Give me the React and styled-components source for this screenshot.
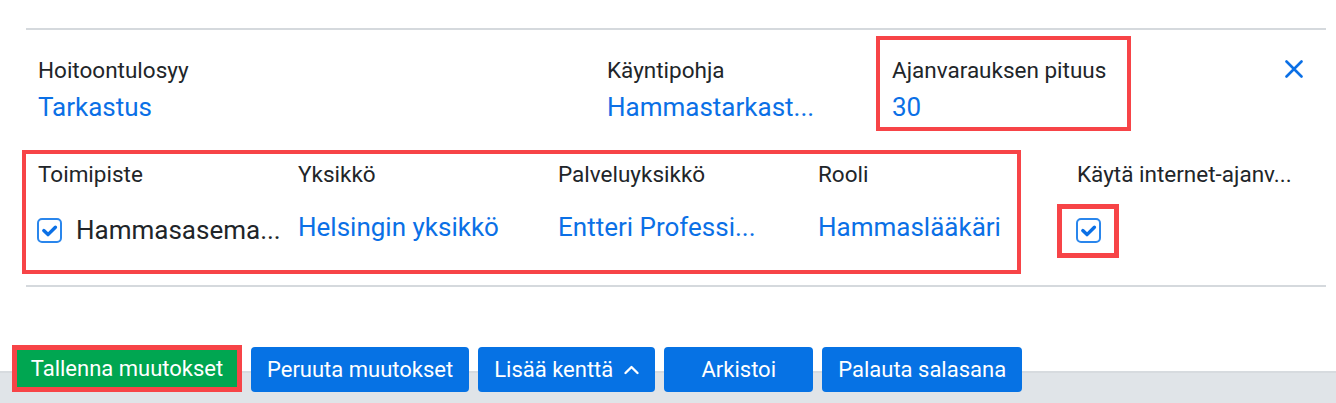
import styled, { createGlobalStyle } from 'styled-components';

const GlobalStyle = createGlobalStyle`
  body {
    margin: 0;
    font-family: Roboto, "Liberation Sans", sans-serif;
    color: #212529;
    background: #fff;
  }
`;

const BLUE = '#0b70e6';
const RED = '#f74447';

const CheckBox = () => (
  <CheckIcon viewBox="0 0 25 25" width="25" height="25">
    <rect x="1" y="1" width="23" height="23" rx="4" fill="#fff" stroke="#2a86ec" strokeWidth="2" />
    <path d="M6.8 12.6l4.2 4 7.4-7.4" fill="none" stroke={BLUE} strokeWidth="3.4" strokeLinecap="round" strokeLinejoin="round" />
  </CheckIcon>
);

const App = () => {
  return (
    <Page>
      <GlobalStyle />
      <Card>
        <Rule />
        <TopRow>
          <Cell $width={569}>
            <Label>Hoitoontulosyy</Label>
            <Value>Tarkastus</Value>
          </Cell>
          <Cell $width={285}>
            <Label>Käyntipohja</Label>
            <Value>Hammastarkast...</Value>
          </Cell>
          <Cell $width={255} $marked>
            <Label>Ajanvarauksen pituus</Label>
            <Value>30</Value>
          </Cell>
          <CloseButton aria-label="Sulje">
            <svg viewBox="0 0 18 18" width="18" height="18">
              <path d="M1.5 1.5l15 15M16.5 1.5l-15 15" stroke={BLUE} strokeWidth="2.6" strokeLinecap="round" />
            </svg>
          </CloseButton>
        </TopRow>
        <MiddleRow>
          <Group>
            <Field>
              <Label>Toimipiste</Label>
              <CheckValue>
                <CheckBox />
                <Value $plain>Hammasasema...</Value>
              </CheckValue>
            </Field>
            <Field>
              <Label>Yksikkö</Label>
              <Value>Helsingin yksikkö</Value>
            </Field>
            <Field>
              <Label>Palveluyksikkö</Label>
              <Value>Entteri Professi...</Value>
            </Field>
            <Field>
              <Label>Rooli</Label>
              <Value>Hammaslääkäri</Value>
            </Field>
          </Group>
          <InternetField>
            <InternetLabel>Käytä internet-ajanv...</InternetLabel>
            <CheckFrame>
              <CheckBox />
            </CheckFrame>
          </InternetField>
        </MiddleRow>
        <Rule $bottom />
      </Card>
      <Footer>
        <SaveButton>Tallenna muutokset</SaveButton>
        <Button>Peruuta muutokset</Button>
        <Button>
          Lisää kenttä
          <svg viewBox="0 0 15 10" width="15" height="10">
            <path d="M1.5 8L7.5 2l6 6" fill="none" stroke="#fff" strokeWidth="2.3" strokeLinecap="round" strokeLinejoin="round" />
          </svg>
        </Button>
        <Button $minWidth={149}>Arkistoi</Button>
        <Button>Palauta salasana</Button>
      </Footer>
    </Page>
  );
};

const Page = styled.div`
  width: 1336px;
  height: 403px;
  overflow: hidden;
  display: flex;
  flex-direction: column;
`;

const Card = styled.div`
  padding: 28px 10px 0 22px;
`;

const Rule = styled.div`
  height: 2px;
  background: #d5d9dd;
  margin-left: 4px;
  margin-top: ${(props) => (props.$bottom ? '11px' : '0')};
`;

const TopRow = styled.div`
  display: flex;
  align-items: flex-start;
  margin-top: 6px;
`;

const Cell = styled.div`
  width: ${(props) => props.$width}px;
  box-sizing: border-box;
  border: 4px solid ${(props) => (props.$marked ? RED : 'transparent')};
  padding: 15px 12px 3px;
  display: flex;
  flex-direction: column;
  gap: 5px;
`;

const Label = styled.div`
  font-size: 22.5px;
  line-height: 30px;
  white-space: nowrap;
`;

const Value = styled.div`
  font-size: 26px;
  line-height: 34px;
  white-space: nowrap;
  color: ${(props) => (props.$plain ? '#212529' : BLUE)};
`;

const CloseButton = styled.button`
  margin: 24px 23px 0 auto;
  padding: 0;
  border: none;
  background: none;
  display: flex;
  cursor: pointer;
`;

const MiddleRow = styled.div`
  display: flex;
  align-items: flex-start;
  margin-top: 19px;
`;

const Group = styled.div`
  display: grid;
  grid-template-columns: repeat(3, 260px) 187px;
  border: 4px solid ${RED};
  padding: 5px 12px 23px;
`;

const Field = styled.div`
  display: flex;
  flex-direction: column;
  gap: 21px;
  min-width: 0;
`;

const CheckValue = styled.div`
  display: flex;
  align-items: center;
  gap: 14px;
  margin-top: 3px;
  margin-left: -1px;
`;

const CheckIcon = styled.svg`
  display: block;
  flex-shrink: 0;
`;

const InternetField = styled.div`
  margin-left: 36px;
  padding-top: 9px;
  display: flex;
  flex-direction: column;
  align-items: flex-start;
`;

const InternetLabel = styled(Label)`
  padding-left: 20px;
`;

const CheckFrame = styled.div`
  margin-top: 15px;
  border: 5px solid ${RED};
  padding: 9px 13px 10px 14px;
`;

const Footer = styled.div`
  flex: 1;
  display: flex;
  align-items: flex-end;
  gap: 9px;
  padding: 0 0 11px 12px;
  background: linear-gradient(#fff 0 84px, #d7dbdf 84px 86px, #e0e4e8 86px);
`;

const Button = styled.button`
  height: 45px;
  box-sizing: border-box;
  min-width: ${(props) => props.$minWidth || 0}px;
  padding: 0 16px;
  border: none;
  border-radius: 4px;
  background: #0672e4;
  color: #fff;
  font-family: inherit;
  font-size: 22px;
  display: inline-flex;
  align-items: center;
  justify-content: center;
  gap: 11px;
`;

const SaveButton = styled(Button)`
  height: 47px;
  width: 230px;
  padding: 0;
  border: 5px solid ${RED};
  border-radius: 0;
  background: #00a651;
`;

export default App;
